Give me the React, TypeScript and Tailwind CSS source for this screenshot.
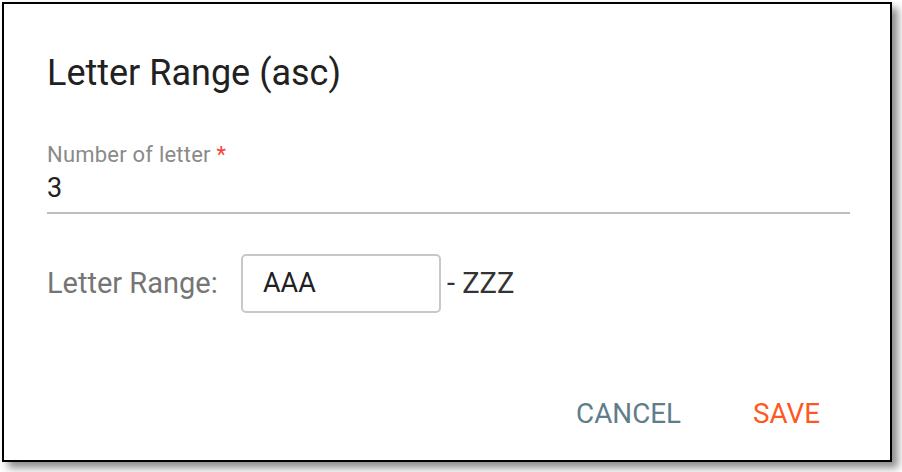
export default function App() {
  return (
    <div className="w-[902px] h-[472px] bg-white p-[2px]" style={{ fontFamily: "Roboto, 'Liberation Sans', sans-serif" }}>
      <div className="w-[890px] h-[460px] bg-white border-2 border-black shadow-[6px_6px_8px_rgba(0,0,0,0.45)] flex flex-col px-[43px]">
        {/* Title */}
        <h2 className="mt-[49px] text-[36px] leading-[40px] text-[#212121] font-normal">Letter Range (asc)</h2>

        {/* Number field */}
        <div className="mt-[49px] w-[803px] border-b-2 border-[#bdbdbd] pb-[8px]">
          <div className="text-[22px] leading-[26px] tracking-[0.01em] text-[#8a8a8a]">
            Number of letter <span className="text-[#f44336]">*</span>
          </div>
          <div className="mt-[4px] text-[27px] leading-[32px] text-[#212121]">3</div>
        </div>

        {/* Letter range row */}
        <div className="mt-[40px] flex items-center">
          <span className="text-[29px] text-[#757575] w-[194px]">Letter Range:</span>
          <div className="w-[200px] h-[59px] border-2 border-[#c8c8c8] rounded-[5px] flex items-center px-[20px] text-[27px] text-[#212121]">
            AAA
          </div>
          <span className="ml-[6px] text-[29px] text-[#333333]">- ZZZ</span>
        </div>

        {/* Actions */}
        <div className="mt-auto mb-[30px] flex justify-end gap-[72px] pr-[27px]">
          <button className="text-[27.8px] leading-[32px] text-[#607d8b] uppercase">Cancel</button>
          <button className="text-[27.8px] leading-[32px] text-[#ff5722] uppercase">Save</button>
        </div>
      </div>
    </div>
  )
}
